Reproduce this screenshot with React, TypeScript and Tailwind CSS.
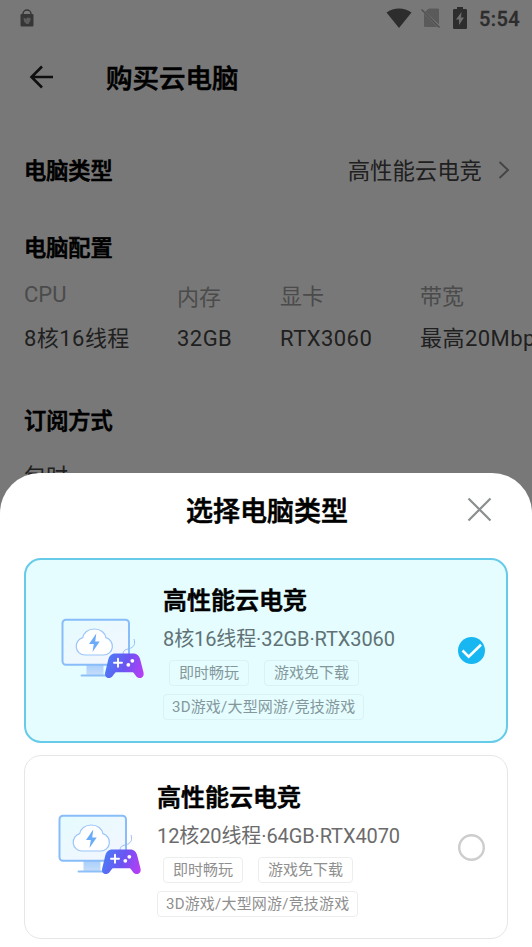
/**
 * App.tsx
 * Cloud PC purchase page with the "choose PC type" bottom sheet open.
 */

interface Plan {
  id: string;
  name: string;
  spec: string;
  tags: string[];
  scene: string;
}

const SPECS = [
  { label: 'CPU', value: '8核16线程', width: 'w-[153px]', labelBox: 'leading-[46px]' },
  { label: '内存', value: '32GB', width: 'w-[103px]', labelBox: 'leading-[51px]' },
  { label: '显卡', value: 'RTX3060', width: 'w-[140px]', labelBox: 'leading-[50px]' },
  { label: '带宽', value: '最高20Mbps', width: 'w-[140px]', labelBox: 'leading-[50px]' },
];

const PLANS: Plan[] = [
  {
    id: 'rtx3060',
    name: '高性能云电竞',
    spec: '8核16线程·32GB·RTX3060',
    tags: ['即时畅玩', '游戏免下载'],
    scene: '3D游戏/大型网游/竞技游戏',
  },
  {
    id: 'rtx4070',
    name: '高性能云电竞',
    spec: '12核20线程·64GB·RTX4070',
    tags: ['即时畅玩', '游戏免下载'],
    scene: '3D游戏/大型网游/竞技游戏',
  },
];

function StatusBar() {
  return (
    <div className="flex h-9 items-center pl-5 pr-3 text-[#606060]">
      <svg width="14" height="18" viewBox="0 0 14 18" fill="none">
        <path d="M3 6V5a4 4 0 0 1 8 0v1" stroke="#747474" strokeWidth="1.5" />
        <rect x="0.5" y="5" width="13" height="12.5" rx="1" fill="#747474" />
        <path d="M3.500 8.500 6 10l1.500-1.500L10.500 9v2.500L8.500 15H6.500L4 12.500z" fill="#c4c4c4" />
      </svg>
      <svg className="ml-auto" width="26" height="20" viewBox="0 0 26 20">
        <path d="M0.5 4.5C8 -1 18 -1 25.5 4.5L13 20z" fill="currentColor" />
      </svg>
      <svg className="ml-[9px]" width="20" height="20" viewBox="0 0 20 20">
        <path d="M8 0.500h8.500c1 0 1.500.6 1.500 1.500v14.500L4 3.800z" fill="#c0c0c0" />
        <path d="M3 5.500 16.500 19H4.500C3.500 19 3 18.500 3 17.500z" fill="#c0c0c0" />
        <path d="M0.500 1.500 18.500 19.500" stroke="#a8a8a8" strokeWidth="1.500" />
      </svg>
      <svg className="ml-3" width="14" height="22" viewBox="0 0 14 22">
        <path d="M4 0h6v2h2.500c1 0 1.500.5 1.500 1.500v17c0 1-.5 1.500-1.500 1.500h-11C.5 22 0 21.500 0 20.500v-17C0 2.500.5 2 1.500 2H4z" fill="currentColor" />
        <path d="M8.500 5 3 12.500h3V18l5-7.500H8z" fill="#e8e8e8" />
      </svg>
      <span className="mt-px ml-3 text-[20px] font-medium tracking-[0.4px] [-webkit-text-stroke:0.3px]">5:54</span>
    </div>
  );
}

function PlanArt() {
  return (
    <svg className="mb-0.5 shrink-0" width="90" height="70" viewBox="0 0 90 70" fill="none">
      <defs>
        <linearGradient id="screen" x1="20" y1="4" x2="48" y2="50" gradientUnits="userSpaceOnUse">
          <stop stopColor="#e6fbfe" />
          <stop offset="1" stopColor="#f2f6ff" />
        </linearGradient>
        <linearGradient id="stand" x1="36" y1="50" x2="36" y2="60" gradientUnits="userSpaceOnUse">
          <stop stopColor="#a9cffb" />
          <stop offset="1" stopColor="#c5ddfb" />
        </linearGradient>
        <linearGradient id="pad" x1="48" y1="46" x2="84" y2="60" gradientUnits="userSpaceOnUse">
          <stop stopColor="#4b7cf6" />
          <stop offset="0.5" stopColor="#6a55f2" />
          <stop offset="1" stopColor="#b63df5" />
        </linearGradient>
      </defs>

      {/* Monitor */}
      <path d="M28.500 50h17v10.500h-17z" fill="url(#stand)" />
      <path d="M23.500 60.500H49" stroke="#8ec0f8" strokeWidth="1.800" strokeLinecap="round" />
      <rect x="4.500" y="4.800" width="66.500" height="45" rx="3.500" fill="url(#screen)" stroke="#88bdf9" strokeWidth="2" />

      {/* Cloud with bolt */}
      <path
        d="M27 40a8.800 8.800 0 0 1-2.300-17.300C25.500 17.500 30 14 36.300 14s10.800 3.500 11.600 8.700A8.800 8.800 0 0 1 45.600 40z"
        fill="#fff"
        stroke="#9ac5fa"
        strokeWidth="1.200"
      />
      <path d="M38.300 18.500 31 29h4.800l-1.300 8L41.700 26.500h-4.500z" fill="#6aacf8" />

      {/* Gamepad */}
      <path d="M65 39c.3-5 4.500-4.500 7.500-5.800 4-1.800 4.800-4.700 3.500-9.200" stroke="#8cb5f6" strokeWidth="0.900" />
      <path
        d="M54.500 39c2.500-1 4.500-.4 7-.4h9.500c2.500 0 4.500-.6 7 .4 2.500.9 3.500 3 4.200 5.500l3.200 12.500c.9 3.600-.7 6-3.400 6-3.600 0-4.300-3-7-5.800H57.700c-2.700 2.800-3.400 5.800-7 5.800-2.700 0-4.300-2.400-3.400-6l3-12.500c.7-2.500 1.700-4.600 4.200-5.500z"
        fill="url(#pad)"
      />
      <path d="M60 43.700v8M56 47.700h8" stroke="#fff" strokeWidth="1.900" strokeLinecap="round" />
      <circle cx="74.300" cy="45.800" r="1.900" fill="#fff" />
      <circle cx="70.300" cy="49.800" r="1.900" fill="#fff" />
    </svg>
  );
}

function Radio({ checked }: { checked: boolean }) {
  if (!checked) {
    return (
      <svg className="shrink-0" width="27" height="27" viewBox="0 0 27 27" fill="none">
        <circle cx="13.500" cy="13.500" r="12.300" stroke="#cdcdcd" strokeWidth="2.400" />
      </svg>
    );
  }
  return (
    <svg className="shrink-0" width="27" height="27" viewBox="0 0 27 27" fill="none">
      <circle cx="13.500" cy="13.500" r="13.500" fill="#18b7f2" />
      <path d="m4.500 13.500 6.200 6.200L23 7.700" stroke="#fff" strokeWidth="2.600" />
    </svg>
  );
}

function Tag({ children, selected }: { children: string; selected: boolean }) {
  return (
    <span
      className={`flex h-[26px] items-center rounded-[4px] border pt-px text-[15px] whitespace-nowrap ${
        selected ? 'border-[#d9f2f6] text-[#84989c]' : 'border-[#eceeee] text-[#8f8f8f]'
      }`}
    >
      {children}
    </span>
  );
}

function PlanCard({ plan, selected }: { plan: Plan; selected: boolean }) {
  return (
    <div
      className={`flex items-center rounded-[17px] ${
        selected
          ? 'h-[185px] border-2 border-[#66cbe8] bg-[#e5fdff] pr-[21px] pl-8'
          : 'h-[184px] border border-[#e6e6e6] bg-white pr-[22px] pl-[30px]'
      }`}
    >
      <PlanArt />
      <div className={`flex h-full flex-col ${selected ? 'ml-[15px] pt-[21px]' : 'ml-[12px] pt-[22px]'}`}>
        <h3 className="h-10 text-[24px] leading-10 font-medium text-black [-webkit-text-stroke:0.7px]">{plan.name}</h3>
        <p
          className={`h-[39px] text-[20px] leading-[36px] tracking-[-0.100px] whitespace-nowrap ${
            selected ? 'text-[#607275]' : 'text-[#6b6b6b]'
          }`}
        >
          {plan.spec}
        </p>
        <div className="ml-1.5 flex gap-[15px] *:px-[9px]">
          {plan.tags.map((tag) => (
            <Tag key={tag} selected={selected}>{tag}</Tag>
          ))}
        </div>
        <div className="mt-2 flex tracking-[0.200px] *:px-2">
          <Tag selected={selected}>{plan.scene}</Tag>
        </div>
      </div>
      <div className="ml-auto flex">
        <Radio checked={selected} />
      </div>
    </div>
  );
}

function PurchasePage() {
  return (
    <div className="text-[22px] text-[#454545]">
      <StatusBar />

      <header className="flex h-[84px] items-center pl-[28px] text-black">
        <svg className="mb-0.5" width="26" height="26" viewBox="0 0 26 26" fill="none" stroke="#202020" strokeWidth="2.600">
          <path d="M14 2.500 3.500 13 14 23.500M3.500 13H25" />
        </svg>
        <h1 className="mt-0.5 ml-[52px] text-[26.500px] font-medium [-webkit-text-stroke:0.6px]">购买云电脑</h1>
      </header>

      <div className="flex h-[102px] items-center pl-6 pr-[22px]">
        <h2 className="mt-0.5 text-[22.200px] font-medium text-black [-webkit-text-stroke:0.7px]">电脑类型</h2>
        <span className="mt-0.5 ml-auto text-[22.400px]">高性能云电竞</span>
        <svg className="mb-[3px] ml-4" width="12" height="20" viewBox="0 0 12 20" fill="none">
          <path d="m1.500 2 8.500 8-8.500 8" stroke="#949494" strokeWidth="2" />
        </svg>
      </div>

      <h2 className="h-[50px] pl-6 text-[22.200px] leading-[52px] font-medium text-black [-webkit-text-stroke:0.7px]">电脑配置</h2>
      <div className="flex pl-6">
        {SPECS.map((item) => (
          <div key={item.label} className={`shrink-0 whitespace-nowrap ${item.width}`}>
            <div className={`h-[50px] text-[#a0a0a0] ${item.labelBox}`}>{item.label}</div>
            <div className="h-[34px] leading-[34px] tracking-[0.450px]">{item.value}</div>
          </div>
        ))}
      </div>

      <h2 className="mt-10 h-[50px] pl-6 text-[22.200px] leading-[51px] font-medium text-black [-webkit-text-stroke:0.7px]">订阅方式</h2>
      <p className="h-[60px] pl-6 leading-[62px]">包时</p>
    </div>
  );
}

export default function App() {
  return (
    <div className="relative h-[947px] w-[532px] overflow-hidden bg-white font-['Roboto','Noto_Sans_CJK_SC',sans-serif]">
      <PurchasePage />
      <div className="absolute inset-0 bg-black/53" />

      {/* Bottom sheet */}
      <section className="absolute inset-x-0 bottom-0 h-[474px] rounded-t-[40px] bg-white px-6">
        <div className="relative flex h-[85px] items-center justify-center pb-1.5 pl-0.5">
          <h2 className="text-[27px] font-medium text-black [-webkit-text-stroke:0.6px]">选择电脑类型</h2>
          <svg className="absolute top-6 right-4" width="25" height="25" viewBox="0 0 25 25" fill="none">
            <path d="m1.500 1.500 22 22M23.500 1.500l-22 22" stroke="#8b8f8f" strokeWidth="2.200" />
          </svg>
        </div>
        <div className="flex flex-col gap-3">
          {PLANS.map((plan, i) => (
            <PlanCard key={plan.id} plan={plan} selected={i === 0} />
          ))}
        </div>
      </section>
    </div>
  );
}
